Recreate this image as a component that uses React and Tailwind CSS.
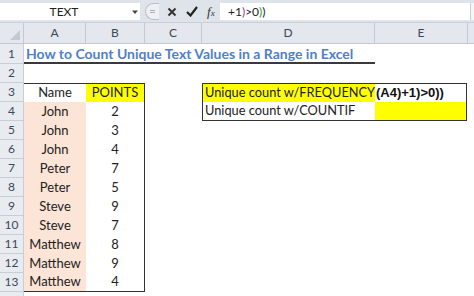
import React from "react";

const F = { fontFamily: "Lato, 'Open Sans', sans-serif" };

function RowHead({ n, h = "h-[19px]" }) {
  return (
    <div className={`w-[24px] ${h} shrink-0 bg-[#e8ecf1] border-r border-b border-[#c8ced6] flex items-center justify-center text-[12px] text-[#3c4858]`}>
      {n}
    </div>
  );
}

const names = ["John", "John", "John", "Peter", "Peter", "Steve", "Steve", "Matthew", "Matthew", "Matthew"];
const pts = [2, 3, 4, 7, 5, 9, 7, 8, 9, 4];

export default function App() {
  return (
    <div className="w-[474px] h-[296px] overflow-hidden bg-white text-[#222]" style={F}>
      {/* formula bar */}
      <div className="h-[23px] bg-[#dfe4ea] pt-[3px] flex items-start border-b border-[#c9cfd6]">
        <div className="w-[140px] h-[17px] bg-white flex items-center">
          <div className="w-[128px] text-center text-[12px] text-[#222]">TEXT</div>
          <svg width="8" height="6" viewBox="0 0 8 6" className="ml-[3px]">
            <path d="M1 1.5 L7 1.5 L4 5 Z" fill="#444" />
          </svg>
        </div>
        <div className="w-[80px] h-[17px] flex items-center relative">
          <div className="ml-[5px] w-[14px] h-[17px] rounded-l-full border border-r-0 border-[#b9c0c9] bg-[#eef1f4] flex items-center justify-center">
            <div className="w-[5px] h-[3px] border-y border-[#a8b0ba]" />
          </div>
          <svg width="10" height="10" viewBox="0 0 10 10" className="ml-[8px]">
            <path d="M1.5 1.5 L8.5 8.5 M8.5 1.5 L1.5 8.5" stroke="#333" strokeWidth="2" />
          </svg>
          <svg width="12" height="11" viewBox="0 0 12 11" className="ml-[9px]">
            <path d="M1 6 L4.5 9.5 L11 1" stroke="#222" strokeWidth="2.2" fill="none" />
          </svg>
          <span
            className="ml-[9px] text-[13px] italic text-[#333] leading-none"
            style={{ fontFamily: "'Liberation Serif', serif" }}
          >
            f<span className="text-[9px]">x</span>
          </span>
        </div>
        <div className="w-[250px] h-[17px] bg-white flex items-center pl-[8px] text-[12px] text-[#222]">
          <span>+1</span>
          <span className="text-[#9b30a8]">)</span>
          <span>&gt;0</span>
          <span className="text-[#2a9a3a]">)</span>
          <span>)</span>
        </div>
        <div className="flex-1 h-[17px] bg-[#f4f6f8] border-l border-[#c9cfd6]" />
      </div>

      {/* column headers */}
      <div className="flex h-[21px] bg-[#e4e8ee] text-[12px] text-[#3c4858]">
        <div className="w-[24px] shrink-0 border-r border-b border-[#c3c9d1] relative">
          <svg width="10" height="10" viewBox="0 0 10 10" className="absolute right-[3px] bottom-[3px]">
            <path d="M10 0 L10 10 L0 10 Z" fill="#c3c9d1" />
          </svg>
        </div>
        <div className="w-[62px] shrink-0 border-r border-b border-[#c3c9d1] flex items-center justify-center">A</div>
        <div className="w-[59px] shrink-0 border-r border-b border-[#c3c9d1] flex items-center justify-center">B</div>
        <div className="w-[57px] shrink-0 border-r border-b border-[#c3c9d1] flex items-center justify-center">C</div>
        <div className="w-[173px] shrink-0 border-r border-b border-[#c3c9d1] flex items-center justify-center">D</div>
        <div className="w-[93px] shrink-0 border-r border-b border-[#c3c9d1] flex items-center justify-center">E</div>
        <div className="flex-1 border-b border-[#c3c9d1]" />
      </div>

      {/* row 1 */}
      <div className="flex h-[20px]">
        <RowHead n={1} h="h-[20px]" />
        <div className="w-[351px] shrink-0 border-b-2 border-[#3a3a3a] flex items-center pl-[2px] text-[14px] font-bold text-[#4f7fcd] whitespace-nowrap">
          How to Count Unique Text Values in a Range in Excel
        </div>
      </div>

      {/* row 2 */}
      <div className="flex h-[19px]">
        <RowHead n={2} />
      </div>

      {/* row 3 */}
      <div className="flex h-[19px] text-[13px]">
        <RowHead n={3} />
        <div className="w-[62px] shrink-0 border-t border-[#333] flex items-center justify-center">Name</div>
        <div className="w-[59px] shrink-0 border-t border-r border-[#333] bg-[#ffff00] flex items-center justify-center">POINTS</div>
        <div className="w-[57px] shrink-0" />
        <div className="w-[173px] shrink-0 border-t border-l border-[#333] bg-[#ffff00] flex items-center pl-[2px] text-[12.8px] whitespace-nowrap">
          Unique count w/FREQUENCY
        </div>
        <div
          className="w-[92px] shrink-0 border-t border-r border-[#333] flex items-center pl-[1px] text-[13px] font-bold text-[#111] whitespace-nowrap"
          style={{ fontFamily: "'Liberation Sans', Arial, sans-serif" }}
        >
          (A4)+1)&gt;0))
        </div>
      </div>

      {/* rows 4-13 */}
      {names.map((nm, i) => {
        const last = i === names.length - 1;
        return (
          <div key={i} className="flex h-[19px] text-[13px]">
            <RowHead n={i + 4} />
            <div className={`w-[62px] shrink-0 bg-[#fce4d6] flex items-center justify-center ${last ? "border-b border-[#333]" : ""}`}>
              {nm}
            </div>
            <div className={`w-[59px] shrink-0 border-r border-[#333] flex items-center justify-center ${last ? "border-b" : ""}`}>
              {pts[i]}
            </div>
            {i === 0 && (
              <>
                <div className="w-[57px] shrink-0" />
                <div className="w-[173px] shrink-0 border-l border-b border-[#333] flex items-center pl-[2px] text-[12.8px] whitespace-nowrap">
                  Unique count w/COUNTIF
                </div>
                <div className="w-[92px] shrink-0 border-r border-b border-[#333] bg-[#ffff00]" />
              </>
            )}
          </div>
        );
      })}

      {/* row 14 (sliver) */}
      <div className="flex h-[19px]">
        <RowHead n="" />
      </div>
    </div>
  );
}
